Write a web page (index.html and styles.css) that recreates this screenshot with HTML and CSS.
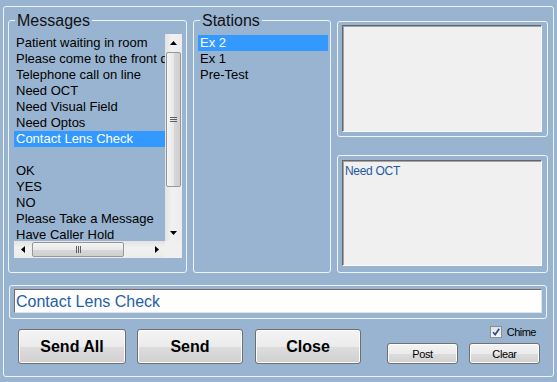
FILE: index.html
```html
<!DOCTYPE html>
<html>
<head>
<meta charset="utf-8">
<link rel="stylesheet" href="styles.css">
</head>
<body>
<div class="frame">
  <div class="top">
    <fieldset class="group messages">
      <legend>Messages</legend>
      <div class="listbox">
        <div class="items">
          <div class="item">Patient waiting in room</div>
          <div class="item">Please come to the front desk</div>
          <div class="item">Telephone call on line</div>
          <div class="item">Need OCT</div>
          <div class="item">Need Visual Field</div>
          <div class="item">Need Optos</div>
          <div class="item sel">Contact Lens Check</div>
          <div class="item"></div>
          <div class="item">OK</div>
          <div class="item">YES</div>
          <div class="item">NO</div>
          <div class="item">Please Take a Message</div>
          <div class="item">Have Caller Hold</div>
        </div>
        <div class="vscroll">
          <div class="sbtn"><svg width="7" height="4" viewBox="0 0 7 4"><polygon points="0,4 7,4 3.5,0" fill="#000"/></svg></div>
          <div class="vthumb"><svg width="7" height="5" viewBox="0 0 7 5"><path d="M0 0.5H7M0 2.5H7M0 4.5H7" stroke="#606060" stroke-width="1"/></svg></div>
          <div class="spacer"></div>
          <div class="sbtn"><svg width="7" height="4" viewBox="0 0 7 4"><polygon points="0,0 7,0 3.5,4" fill="#000"/></svg></div>
        </div>
        <div class="hscroll">
          <div class="sbtn h"><svg width="4" height="7" viewBox="0 0 4 7"><polygon points="4,0 4,7 0,3.5" fill="#000"/></svg></div>
          <div class="hthumb"><svg width="5" height="7" viewBox="0 0 5 7"><path d="M0.5 0V7M2.5 0V7M4.5 0V7" stroke="#606060" stroke-width="1"/></svg></div>
          <div class="spacer"></div>
          <div class="sbtn h"><svg width="4" height="7" viewBox="0 0 4 7"><polygon points="0,0 0,7 4,3.5" fill="#000"/></svg></div>
        </div>
        <div class="corner"></div>
      </div>
    </fieldset>
    <fieldset class="group stations">
      <legend>Stations</legend>
      <div class="slist">
        <div class="item sel">Ex 2</div>
        <div class="item">Ex 1</div>
        <div class="item">Pre-Test</div>
      </div>
    </fieldset>
    <div class="right">
      <div class="box box-top"><div class="panel"></div></div>
      <div class="box box-bottom"><div class="panel">Need OCT</div></div>
    </div>
  </div>
  <div class="inputgroup"><div class="input">Contact Lens Check</div></div>
  <div class="bottom">
    <button class="btn big w108">Send All</button>
    <button class="btn big w106 g11">Send</button>
    <button class="btn big w106 g12">Close</button>
    <div class="cluster">
      <div class="chime"><span class="cb"><svg width="10" height="10" viewBox="0 0 10 10"><path d="M2 5.2L4.2 7.6L8.2 1.8" fill="none" stroke="#2b4f8c" stroke-width="1.7"/></svg></span><span class="chime-label">Chime</span></div>
      <div class="smallrow">
        <button class="btn small">Post</button>
        <button class="btn small">Clear</button>
      </div>
    </div>
  </div>
</div>
</body>
</html>
```
FILE: styles.css
```css
html, body {
  margin: 0;
  padding: 0;
}
body {
  background: #99b4d1;
  font-family: "Liberation Sans", Arial, sans-serif;
  width: 557px;
  height: 382px;
  overflow: hidden;
  color: #000;
}
.frame {
  margin: 6px 0 0 3px;
  width: 551px;
  height: 371px;
  box-sizing: border-box;
  border: 1px solid #eef3f8;
  border-radius: 3px;
  padding: 4px 0 0 4px;
}
.top {
  display: flex;
  height: 262px;
}
.group {
  margin: 0;
  padding: 0;
  min-width: 0;
  box-sizing: border-box;
  height: 262px;
  border: 1px solid #eef3f8;
  border-radius: 3px;
}
.group legend {
  margin-left: 6px;
  padding: 1px 2px 0;
  font-size: 16px;
  line-height: 18px;
  color: #111;
}
.messages { width: 179px; }
.stations { width: 138px; margin-left: 6px; }
.right {
  width: 211px;
  margin-left: 6px;
  padding-top: 10px;
  display: flex;
  flex-direction: column;
  gap: 18px;
}
.box {
  border: 1px solid #eef3f8;
  border-radius: 3px;
  box-sizing: border-box;
  display: flex;
}
.box-top { height: 116px; padding: 3px 5px 4px 4px; }
.box-bottom { height: 118px; padding: 4px 5px 6px 4px; }
.panel {
  flex: 1;
  background: #f0f0f0;
  border-top: 1px solid #666;
  border-left: 1px solid #666;
  border-right: 1px solid #fafafa;
  border-bottom: 1px solid #fafafa;
  box-shadow: inset 1px 1px 0 #a3a3a3;
  padding: 3px 0 0 2px;
  font-size: 12px;
  line-height: 14px;
  letter-spacing: -0.3px;
  color: #1e5aa0;
}
.listbox {
  display: grid;
  grid-template-columns: 151px 17px;
  grid-template-rows: 207px 17px;
  margin: 4px 0 0 5px;
}
.items {
  overflow: hidden;
  font-size: 13px;
  line-height: 16px;
  padding-top: 1px;
}
.item {
  white-space: nowrap;
  padding-left: 2px;
  height: 16px;
}
.sel {
  background: #3399ff;
  color: #fff;
}
.vscroll {
  background: linear-gradient(to right, #e3e3e3, #f1f1f1 40%, #ececec);
  display: flex;
  flex-direction: column;
}
.hscroll {
  background: linear-gradient(#e3e3e3, #f1f1f1 40%, #ececec);
  display: flex;
}
.sbtn {
  height: 17px;
  display: flex;
  align-items: center;
  justify-content: center;
  flex: none;
}
.sbtn.h { width: 17px; height: 17px; }
.spacer { flex: 1; }
.vthumb {
  margin: 1px 1px 0 1px;
  height: 135px;
  box-sizing: border-box;
  border: 1px solid #979797;
  border-radius: 2px;
  background: linear-gradient(to right, #f4f4f4, #e9e9e9 50%, #d8d8d8 51%, #cfcfcf);
  display: flex;
  align-items: center;
  justify-content: center;
  flex: none;
}
.hthumb {
  margin: 1px 0 1px 1px;
  width: 92px;
  box-sizing: border-box;
  border: 1px solid #979797;
  border-radius: 2px;
  background: linear-gradient(#f4f4f4, #e9e9e9 50%, #d8d8d8 51%, #cfcfcf);
  display: flex;
  align-items: center;
  justify-content: center;
  flex: none;
}
.corner { background: #f0f0f0; }
.slist {
  margin: 5px 2px 0 4px;
  font-size: 13px;
  line-height: 16px;
}
.inputgroup {
  margin: 12px 0 0 1px;
  width: 538px;
  height: 34px;
  box-sizing: border-box;
  border: 1px solid #eef3f8;
  border-radius: 3px;
  padding: 3px 4px;
}
.input {
  height: 24px;
  box-sizing: border-box;
  background: #fff;
  border: 1px solid;
  border-color: #6e6e6e #e3e3e3 #e3e3e3 #6e6e6e;
  font-size: 16px;
  line-height: 20px;
  padding-top: 2px;
  color: #1f5fa6;
  padding-left: 1px;
}
.bottom {
  display: flex;
  align-items: flex-end;
  margin-top: 6px;
  height: 39px;
}
.btn {
  margin: 0;
  padding: 0;
  box-sizing: border-box;
  border: 1px solid #707070;
  border-radius: 3px;
  background: linear-gradient(#f4f4f4, #ebebeb 50%, #dddddd 51%, #d0d0d0);
  box-shadow: inset 0 0 0 1px #fbfbfb;
  font-family: "Liberation Sans", Arial, sans-serif;
  color: #000;
}
.big {
  height: 35px;
  font-size: 16px;
  font-weight: bold;
}
.w108 { width: 108px; margin-left: 10px; }
.w106 { width: 106px; }
.g11 { margin-left: 11px; }
.g12 { margin-left: 12px; }
.cluster {
  margin-left: 26px;
  width: 153px;
  display: flex;
  flex-direction: column;
}
.chime {
  display: flex;
  justify-content: flex-end;
  align-items: center;
  height: 14px;
  margin-bottom: 4px;
  padding-right: 4px;
  gap: 5px;
  font-size: 11px;
  letter-spacing: -0.5px;
}
.cb {
  width: 12px;
  height: 12px;
  box-sizing: border-box;
  border: 1px solid #8e8f8f;
  background: linear-gradient(#dfe3e8, #f7f7f7);
  display: flex;
  align-items: center;
  justify-content: center;
}
.smallrow {
  display: flex;
  gap: 11px;
}
.small {
  width: 71px;
  height: 21px;
  font-size: 11px;
  letter-spacing: -0.4px;
}
```
